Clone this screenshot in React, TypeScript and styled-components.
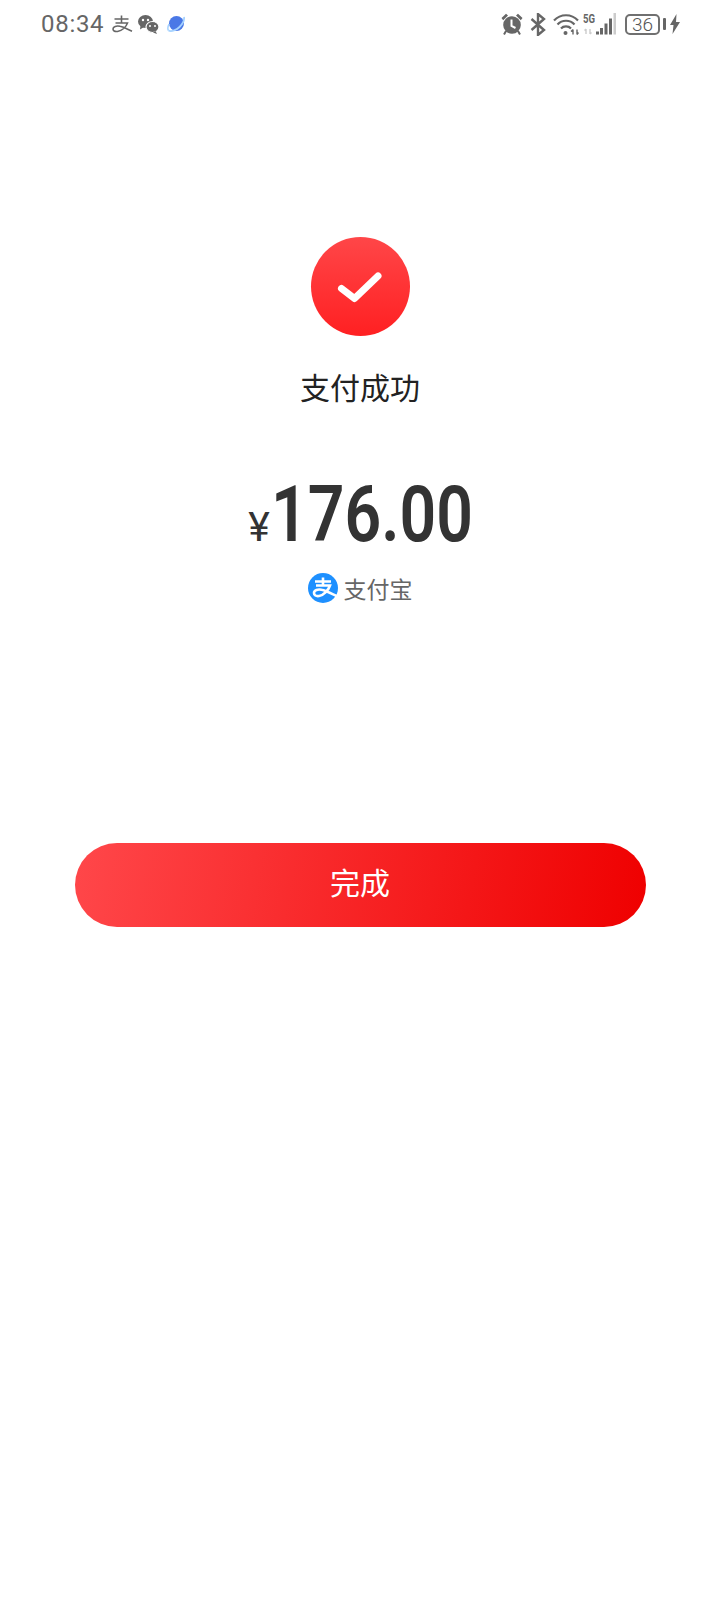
import styled, { createGlobalStyle } from "styled-components";

const GlobalStyle = createGlobalStyle`
  html, body {
    margin: 0;
    padding: 0;
    background: #fff;
  }
`;

const Page = styled.div`
  width: 720px;
  height: 1612px;
  display: flex;
  flex-direction: column;
  align-items: center;
  overflow: hidden;
  background: #fff;
  font-family: "Noto Sans CJK SC", Roboto, sans-serif;
`;

const StatusBar = styled.div`
  width: 100%;
  box-sizing: border-box;
  height: 48px;
  padding: 0 40px 0 41px;
  display: flex;
  align-items: center;
  justify-content: space-between;
  color: #666;
`;

const StatusGroup = styled.div`
  display: flex;
  align-items: center;
`;

const Slot = styled.span<{ $gap: number }>`
  display: flex;
  margin-left: ${(p) => p.$gap}px;
`;

const Clock = styled.span`
  font-family: Roboto, sans-serif;
  font-size: 24px;
  letter-spacing: 0.7px;
`;

const Battery = styled.div`
  width: 35px;
  height: 21px;
  box-sizing: border-box;
  border: 2px solid #707070;
  border-radius: 5px;
  display: flex;
  align-items: center;
  justify-content: center;
  font-family: Roboto, sans-serif;
  font-weight: 300;
  font-size: 19px;
  color: #555;
`;

const SuccessCircle = styled.div`
  margin-top: 189px;
  width: 99px;
  height: 99px;
  border-radius: 50%;
  background: linear-gradient(180deg, #ff4648 0%, #ff2022 100%);
  display: flex;
  align-items: center;
  justify-content: center;
`;

const Title = styled.div`
  margin-top: 28px;
  font-size: 30px;
  line-height: 44px;
  color: #222;
`;

const Amount = styled.div`
  margin-top: 62px;
  display: flex;
  align-items: baseline;
  color: #333;
`;

const Yen = styled.span`
  font-family: Roboto, sans-serif;
  font-size: 41px;
  margin-right: 1px;
`;

const Digits = styled.span`
  display: inline-block;
  width: 201px;
  font-family: Roboto, sans-serif;
  font-weight: 650;
  font-size: 77px;
  line-height: 90px;
  white-space: nowrap;
  transform: scaleX(0.835);
  transform-origin: left center;
`;

const Method = styled.div`
  margin-top: 12px;
  display: flex;
  align-items: center;
  gap: 6px;
  font-size: 23px;
  line-height: 32px;
  color: #666;
`;

const DoneButton = styled.button`
  margin-top: 239px;
  width: 571px;
  height: 84px;
  border: none;
  border-radius: 42px;
  background: linear-gradient(100deg, #ff474a 0%, #ef0000 100%);
  color: #fff;
  font-family: inherit;
  font-size: 30px;
  padding: 0 0 9px;
`;

const AlipayMark = () => (
  <svg width="21" height="18" viewBox="0 0 21 18" fill="none" stroke="#666" strokeWidth="1.6">
    <path d="M2.500 4h14M9.500 .5v7.500M3.500 8h12c-1.500 4-5.500 7.800-10 8.500-3 .4-4.500-1-4.500-2.500 0-2.500 3.500-3.500 7-2.700 4 .8 7.500 3 12 5" />
  </svg>
);

const AlipayLogo = () => (
  <svg width="30" height="30" viewBox="0 0 30 30" fill="none">
    <circle cx="15" cy="15" r="15" fill="#1e90ff" />
    <path d="M7 8.500h16M15 4.500v7.500M8 12.500h14c-1.500 4.500-6 9.500-11 10.500-3 .5-5-.8-5-3 0-3 4-4 7.500-3.200 5 1 9 3.400 15 6.200" stroke="#fff" strokeWidth="2.600" />
  </svg>
);

const WechatIcon = () => (
  <svg width="21" height="19" viewBox="0 0 21 19" fill="#666">
    <ellipse cx="7.500" cy="6.500" rx="7.500" ry="6.500" />
    <path d="M2.500 10.500l-.5 4 4-2.500z" />
    <ellipse cx="14.500" cy="12" rx="6.500" ry="5.500" stroke="#fff" strokeWidth="1.200" />
    <path d="M17.500 16l1.500 3-4-1.500z" />
    <circle cx="5" cy="5" r="1.200" fill="#fff" />
    <circle cx="10" cy="5" r="1.200" fill="#fff" />
    <circle cx="12" cy="11" r="1" fill="#fff" />
    <circle cx="17" cy="11" r="1" fill="#fff" />
  </svg>
);

const PlanetIcon = () => (
  <svg width="18" height="18" viewBox="0 0 18 18" fill="none">
    <circle cx="9.500" cy="8.500" r="7.500" fill="#4a78e6" />
    <path d="M1.500 15.500c3 1.500 8-.5 11-3.500s5-7 4.500-10" stroke="#a5d2ff" strokeWidth="1.800" />
    <path d="M1.500 15.500C.5 14 1 11 2 9" stroke="#a5d2ff" strokeWidth="1.500" />
  </svg>
);

const AlarmIcon = () => (
  <svg width="22" height="22" viewBox="0 0 22 22" fill="#666">
    <circle cx="11" cy="12" r="8.800" />
    <path d="M.5 5L5 .8l2 1.700-4.800 4.700zM21.500 5L17 .8l-2 1.700 4.800 4.700z" />
    <path d="M10.500 6.500v6.500l4 2" stroke="#fff" strokeWidth="2" fill="none" />
    <path d="M5 18l-2 3.500M17 18l2 3.500" stroke="#666" strokeWidth="2" />
  </svg>
);

const BluetoothIcon = () => (
  <svg width="16" height="23" viewBox="0 0 16 23" fill="none" stroke="#666" strokeWidth="2.400">
    <path d="M1.500 6l12.500 11-6 5V1l6 5L1.500 17" />
  </svg>
);

const WifiIcon = () => (
  <svg width="26" height="22" viewBox="0 0 26 22" fill="none" stroke="#666" strokeWidth="2.200">
    <path d="M1 7.500c6.500-7 17.500-7 24 0M4.500 11.500c4.500-5 12.500-5 17 0M8 15.500c2.500-2.800 7.500-2.800 10 0" />
    <circle cx="12.500" cy="20" r="2" fill="#666" stroke="none" />
    <path d="M20 16.500v5M18 18.500l2-2M24 16.500v5M24 21.500l1.500-2" strokeWidth="1.400" />
  </svg>
);

const SignalIcon = () => (
  <svg width="33" height="22" viewBox="0 0 33 22">
    <text x="0" y="9.500" fontFamily="Roboto" fontWeight="700" fontSize="12" fill="#666" textLength="12" lengthAdjust="spacingAndGlyphs">5G</text>
    <path d="M3 16v5M1.500 17.500L3 16M7 16v5M7 21l1.500-1.500" stroke="#ccc" strokeWidth="1.400" fill="none" />
    <rect x="13" y="18.500" width="3" height="3" fill="#666" />
    <rect x="17" y="15" width="3" height="6.500" fill="#666" />
    <rect x="21.500" y="10.500" width="3" height="11" fill="#666" />
    <rect x="26" y="5.500" width="3" height="16" fill="#666" />
    <rect x="30.500" y="0" width="2.500" height="21.500" fill="#ccc" />
  </svg>
);

const BatteryCap = () => (
  <svg width="3" height="12" viewBox="0 0 3 12">
    <rect width="3" height="12" rx="1" fill="#666" />
  </svg>
);

const BoltIcon = () => (
  <svg width="10" height="20" viewBox="0 0 10 20" fill="#666">
    <path d="M6.500 0L0 11h3.500L2.500 20 10 8H6z" />
  </svg>
);

const App = () => {
  return (
    <Page>
      <GlobalStyle />
      <StatusBar>
        <StatusGroup>
          <Clock>08:34</Clock>
          <Slot $gap={8}><AlipayMark /></Slot>
          <Slot $gap={5}><WechatIcon /></Slot>
          <Slot $gap={8}><PlanetIcon /></Slot>
        </StatusGroup>
        <StatusGroup>
          <AlarmIcon />
          <Slot $gap={7}><BluetoothIcon /></Slot>
          <Slot $gap={7}><WifiIcon /></Slot>
          <Slot $gap={4}><SignalIcon /></Slot>
          <Slot $gap={9}><Battery>36</Battery></Slot>
          <Slot $gap={3}><BatteryCap /></Slot>
          <Slot $gap={4}><BoltIcon /></Slot>
        </StatusGroup>
      </StatusBar>
      <SuccessCircle>
        <svg width="46" height="34" viewBox="0 0 46 34" fill="none">
          <path d="M4.500 18.500L17.500 28.500 41 6" stroke="#fff" strokeWidth="7" strokeLinecap="round" strokeLinejoin="round" />
        </svg>
      </SuccessCircle>
      <Title>支付成功</Title>
      <Amount>
        <Yen>¥</Yen>
        <Digits>176.00</Digits>
      </Amount>
      <Method>
        <AlipayLogo />
        支付宝
      </Method>
      <DoneButton>完成</DoneButton>
    </Page>
  );
};

export default App;
